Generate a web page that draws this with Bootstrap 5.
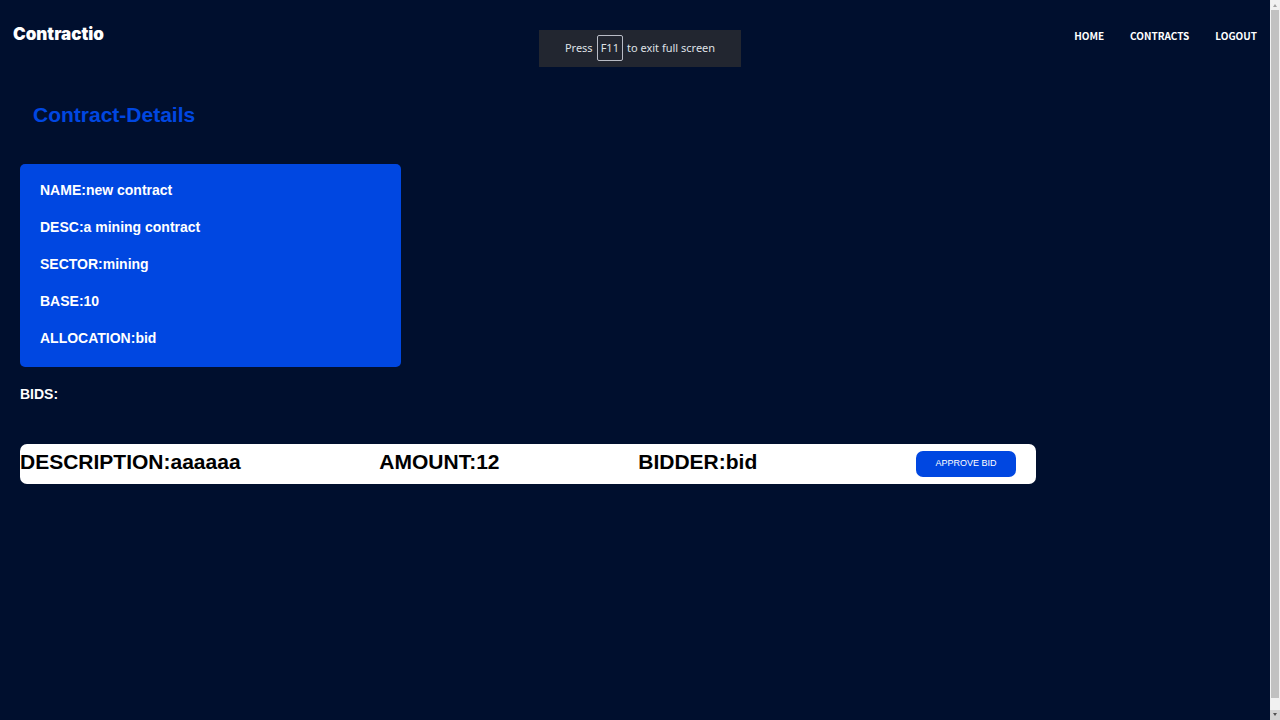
<!DOCTYPE html>
<html lang="en">
<head>
<meta charset="utf-8">
<meta name="viewport" content="width=device-width, initial-scale=1">
<title>Contractio</title>
<link href="https://cdn.jsdelivr.net/npm/bootstrap@5.3.0/dist/css/bootstrap.min.css" rel="stylesheet">
<style>
  :root { --ink: #000f2e; --brand: #0047e1; }
  body { background: var(--ink); color: #fff; font-family: "Liberation Sans", Arial, sans-serif; line-height: 1.2; }
  .site-bar { padding: 24px 13px; height: 71px; }
  .logo { font: 900 17px/20px Inter, sans-serif; }
  .site-links { gap: 26px; font: 700 10px/24px "Noto Sans CJK SC", sans-serif; }
  .page-title { color: var(--brand); font-size: 21px; line-height: 26px; font-weight: 700; margin: 31px 33px 36px; }
  .content { margin-left: 20px; }
  .details { width: 30%; background: var(--brand); border-radius: 5px; padding: 18px 20px 20px; }
  .details, .bids-label { font-size: 14px; line-height: 17px; font-weight: 700; }
  .details dl { gap: 20px; }
  .bids-label { margin: 19px 0 41px; }
  .content-wide { width: 80%; }
  .bid { height: 40px; border-radius: 7px; padding-right: 20px; color: #000; font-size: 21px; line-height: 36px; font-weight: 700; }
  .btn-approve { --bs-btn-color: #fff; --bs-btn-bg: var(--brand); --bs-btn-hover-color: #fff; --bs-btn-hover-bg: #003bbd; --bs-btn-border-width: 0; width: 100px; height: 26px; border-radius: 7px; margin: 7px 0 0 20px; padding: 0 0 2px; font-size: 9px; line-height: 24px; }
  .hint { top: 30px; height: 37px; width: 202px; gap: 4px; padding-bottom: 2px; background: #222630; color: #dfe1e6; font: 11px/16px "Noto Sans", sans-serif; }
  .hint kbd { background: none; color: inherit; border: 1px solid #b9bcc6; border-radius: 2px; padding: 4px 3px; font: inherit; }
  .scroll-rail { width: 10px; height: 100vh; background: #f1f1f1; }
  .scroll-rail .thumb { background: #c1c1c1; margin: 0 1px 12px; }
  .scroll-rail svg { display: block; width: 10px; height: 10px; }
</style>
</head>
<body class="d-flex">
<div class="flex-grow-1">
  <nav class="site-bar d-flex justify-content-between align-items-start">
    <a class="logo text-white text-decoration-none" href="#">Contractio</a>
    <div class="site-links d-flex">
      <a class="text-white text-decoration-none" href="#">HOME</a>
      <a class="text-white text-decoration-none" href="#">CONTRACTS</a>
      <a class="text-white text-decoration-none" href="#">LOGOUT</a>
    </div>
  </nav>
  <main>
    <h1 class="page-title">Contract-Details</h1>
    <section class="details content">
      <dl class="d-flex flex-column mb-0">
        <div class="d-flex"><dt>NAME:</dt><dd class="mb-0">new contract</dd></div>
        <div class="d-flex"><dt>DESC:</dt><dd class="mb-0">a mining contract</dd></div>
        <div class="d-flex"><dt>SECTOR:</dt><dd class="mb-0">mining</dd></div>
        <div class="d-flex"><dt>BASE:</dt><dd class="mb-0">10</dd></div>
        <div class="d-flex"><dt>ALLOCATION:</dt><dd class="mb-0">bid</dd></div>
      </dl>
    </section>
    <section class="content content-wide">
      <h2 class="bids-label">BIDS:</h2>
      <div class="bid bg-white d-flex justify-content-between align-items-start">
        <span>DESCRIPTION:aaaaaa</span>
        <span>AMOUNT:12</span>
        <span>BIDDER:bid</span>
        <button class="btn btn-approve" type="button">APPROVE BID</button>
      </div>
    </section>
  </main>
</div>
<div class="scroll-rail sticky-top d-flex flex-column flex-shrink-0" aria-hidden="true">
  <svg viewBox="0 0 10 10"><path d="M5 4 7 7H3z" fill="#a3a3a3"/></svg>
  <div class="thumb flex-grow-1"></div>
  <svg viewBox="0 0 10 10"><path fill="#d2d2d2" d="M0 0h10v10H0z"/><path d="M3 3h4L5 6z" fill="#505050"/></svg>
</div>
<div class="hint position-fixed start-50 translate-middle-x d-flex align-items-center justify-content-center">
  <span>Press</span><kbd>F11</kbd><span>to exit full screen</span>
</div>
<script src="https://cdn.jsdelivr.net/npm/bootstrap@5.3.0/dist/js/bootstrap.bundle.min.js"></script>
</body>
</html>
